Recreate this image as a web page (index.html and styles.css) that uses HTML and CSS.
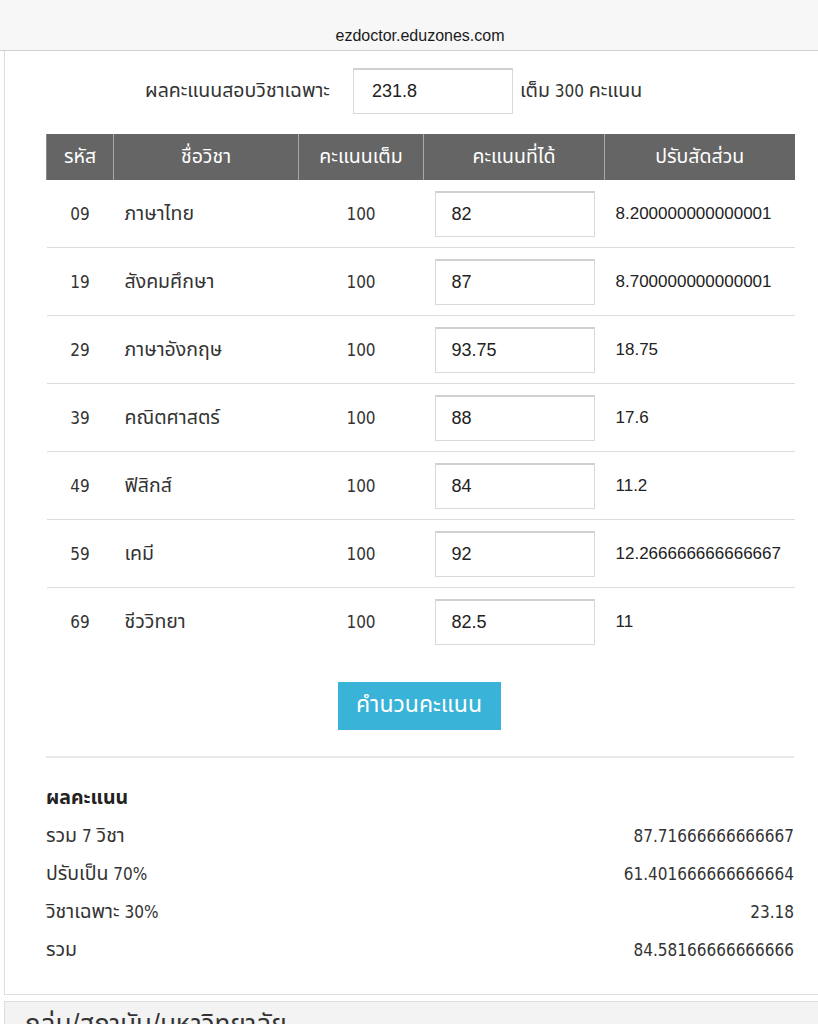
FILE: index.html
```html
<!DOCTYPE html>
<html lang="th">
<head>
<meta charset="utf-8">
<title>ezdoctor</title>
<link rel="stylesheet" href="styles.css">
</head>
<body>
<div class="urlbar"><span class="url">ezdoctor.eduzones.com</span></div>
<div class="page">
  <div class="panel">
    <div class="special">
      <span class="special-label t">ผลคะแนนสอบวิชาเฉพาะ</span>
      <span class="field special-field">231.8</span>
      <span class="special-note"><span class="t">เต็ม</span> 300 <span class="t">คะแนน</span></span>
    </div>
    <table class="scores">
      <colgroup>
        <col class="w-code"><col class="w-name"><col class="w-full"><col class="w-got"><col class="w-adj">
      </colgroup>
      <thead>
        <tr>
          <th><span class="t">รหัส</span></th>
          <th><span class="t">ชื่อวิชา</span></th>
          <th><span class="t">คะแนนเต็ม</span></th>
          <th><span class="t">คะแนนที่ได้</span></th>
          <th><span class="t">ปรับสัดส่วน</span></th>
        </tr>
      </thead>
      <tbody>
        <tr><td class="c-code">09</td><td class="c-name t">ภาษาไทย</td><td class="c-full">100</td><td class="c-got"><span class="field">82</span></td><td class="c-adj">8.200000000000001</td></tr>
        <tr><td class="c-code">19</td><td class="c-name t">สังคมศึกษา</td><td class="c-full">100</td><td class="c-got"><span class="field">87</span></td><td class="c-adj">8.700000000000001</td></tr>
        <tr><td class="c-code">29</td><td class="c-name t">ภาษาอังกฤษ</td><td class="c-full">100</td><td class="c-got"><span class="field">93.75</span></td><td class="c-adj">18.75</td></tr>
        <tr><td class="c-code">39</td><td class="c-name t">คณิตศาสตร์</td><td class="c-full">100</td><td class="c-got"><span class="field">88</span></td><td class="c-adj">17.6</td></tr>
        <tr><td class="c-code">49</td><td class="c-name t">ฟิสิกส์</td><td class="c-full">100</td><td class="c-got"><span class="field">84</span></td><td class="c-adj">11.2</td></tr>
        <tr><td class="c-code">59</td><td class="c-name t">เคมี</td><td class="c-full">100</td><td class="c-got"><span class="field">92</span></td><td class="c-adj">12.266666666666667</td></tr>
        <tr><td class="c-code">69</td><td class="c-name t">ชีววิทยา</td><td class="c-full">100</td><td class="c-got"><span class="field">82.5</span></td><td class="c-adj">11</td></tr>
      </tbody>
    </table>
    <div class="actions"><button class="calc">คำนวนคะแนน</button></div>
    <hr class="divider">
    <div class="results">
      <div class="results-title t">ผลคะแนน</div>
      <div class="res-row"><span><span class="t">รวม</span> 7 <span class="t">วิชา</span></span><span>87.71666666666667</span></div>
      <div class="res-row"><span><span class="t">ปรับเป็น</span> 70%</span><span>61.401666666666664</span></div>
      <div class="res-row"><span><span class="t">วิชาเฉพาะ</span> 30%</span><span>23.18</span></div>
      <div class="res-row"><span class="t">รวม</span><span>84.58166666666666</span></div>
    </div>
  </div>
  <div class="panel2">
    <div class="panel2-title">กลุ่ม/สถาบัน/มหาวิทยาลัย</div>
  </div>
</div>
</body>
</html>
```
FILE: styles.css
```css
html, body {
  margin: 0;
  padding: 0;
  background: #ffffff;
  overflow: hidden;
}
body {
  width: 818px;
  height: 1024px;
  font-family: "DejaVu Sans Condensed", Tahoma, "Noto Sans Thai", Loma, Garuda, "DejaVu Sans", sans-serif;
  color: #333333;
}
.t {
  font-size: 19.5px;
}
.urlbar {
  height: 51px;
  background: #f7f7f7;
  border-bottom: 1px solid #cfcfcf;
  box-sizing: border-box;
  display: flex;
  justify-content: center;
  align-items: flex-end;
  padding-bottom: 5px;
  padding-left: 22px;
}
.url {
  font-family: "Liberation Sans", Arial, sans-serif;
  font-size: 16px;
  color: #1a1a1a;
}
.page {
  padding-left: 4px;
  width: 870px;
}
.panel {
  width: 831px;
  box-sizing: border-box;
  border: 1px solid #dddddd;
  border-top: none;
  padding: 16px 41px 25px 41px;
  background: #ffffff;
}
.special {
  display: flex;
  align-items: center;
  padding-left: 99px;
  height: 47px;
  font-size: 17px;
}
.special-label { margin-right: 23px; }
.field {
  display: flex;
  align-items: center;
  box-sizing: border-box;
  width: 160px;
  height: 46px;
  border: 1px solid #d9d9d9;
  border-top: 2px solid #d0d0d0;
  padding-left: 16px;
  font-family: "Liberation Sans", Arial, sans-serif;
  font-size: 18px;
  color: #222222;
  background: #ffffff;
}
.special-field { margin-right: 7px; padding-left: 18px; }
.scores {
  margin-top: 20px;
  width: 748px;
  table-layout: fixed;
  border-collapse: collapse;
  font-size: 17px;
}
.w-code { width: 67px; }
.w-name { width: 185px; }
.w-full { width: 125px; }
.w-got { width: 181px; }
.w-adj { width: 190px; }
.scores th {
  background: #656565;
  color: #ffffff;
  font-weight: normal;
  height: 46px;
  padding: 0;
  border-left: 1px solid #a8a8a8;
  text-align: center;
}
.scores th:first-child { border-left: 1px solid #8a8a8a; }
.scores td {
  height: 67px;
  padding: 0;
  border-bottom: 1px solid #dddddd;
}
.scores tbody tr:last-child td { border-bottom: none; }
.c-code { text-align: center; }
.c-full { text-align: center; }
td.c-name { padding-left: 11px; }
td.c-got { padding-left: 11px; }
td.c-adj {
  padding-left: 11px;
  font-family: "Liberation Sans", Arial, sans-serif;
  color: #222222;
}
.actions {
  display: flex;
  justify-content: center;
  margin-top: 27px;
  padding-right: 1px;
}
.calc {
  width: 163px;
  height: 48px;
  background: #39b3d7;
  border: none;
  color: #ffffff;
  font-family: inherit;
  font-size: 23px;
  padding: 0 0 2px 0;
}
.divider {
  border: none;
  border-top: 2px solid #e8e8e8;
  margin: 26px 0 0 0;
  width: 748px;
}
.results {
  width: 748px;
  font-size: 17px;
  padding-top: 21px;
}
.results-title {
  font-weight: bold;
  color: #222222;
  height: 38px;
  line-height: 38px;
}
.res-row {
  display: flex;
  justify-content: space-between;
  height: 38px;
  line-height: 38px;
}
.panel2 {
  margin-top: 6px;
  width: 831px;
  box-sizing: border-box;
  border: 1px solid #dddddd;
  background: #f3f3f3;
  height: 60px;
  padding: 3px 20px;
}
.panel2-title {
  font-size: 26px;
  color: #333333;
}
```
